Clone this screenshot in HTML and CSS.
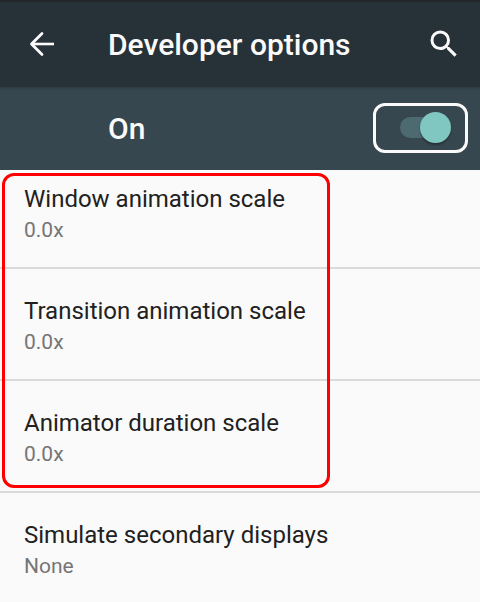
FILE: index.html
```html
<!DOCTYPE html>
<html lang="en">
<head>
    <meta charset="UTF-8">
    <meta name="viewport" content="width=device-width, initial-scale=1.0">
    <title>Developer options</title>
    <link rel="stylesheet" href="styles.css">
</head>
<body>
    <header class="app-bar">
        <button class="icon-btn" type="button" aria-label="Back">
            <svg viewBox="0 0 36 36" fill="none" stroke="currentColor" stroke-width="3">
                <path d="M30 18H8" stroke-width="2.6"/>
                <path d="M18 7.5L7.5 18 18 28.500" stroke-linecap="round" stroke-linejoin="round" stroke-width="2.800"/>
            </svg>
        </button>
        <h1 class="title">Developer options</h1>
        <button class="icon-btn" type="button" aria-label="Search">
            <svg viewBox="0 0 24 24" fill="currentColor">
                <path d="M15.5 14h-.79l-.28-.27A6.471 6.471 0 0 0 16 9.5 6.5 6.5 0 1 0 9.5 16c1.61 0 3.09-.59 4.23-1.57l.27.28v.79l5 4.99L20.49 19l-4.99-5zm-6 0C7.01 14 5 11.99 5 9.5S7.01 5 9.5 5 14 7.01 14 9.5 11.99 14 9.5 14z"/>
            </svg>
        </button>
    </header>

    <div class="switch-bar">
        <label class="switch-label" for="dev-switch">On</label>
        <div class="switch-frame">
            <input class="switch" type="checkbox" role="switch" id="dev-switch" checked>
        </div>
    </div>

    <main class="settings">
        <div class="highlighted">
            <div class="setting">
                <h2 class="name">Window animation scale</h2>
                <p class="value">0.0x</p>
            </div>
            <div class="setting">
                <h2 class="name">Transition animation scale</h2>
                <p class="value">0.0x</p>
            </div>
            <div class="setting">
                <h2 class="name">Animator duration scale</h2>
                <p class="value">0.0x</p>
            </div>
            <div class="outline"></div>
        </div>
        <div class="setting">
            <h2 class="name">Simulate secondary displays</h2>
            <p class="value">None</p>
        </div>
    </main>
</body>
</html>
```

FILE: styles.css
```css
* {
    box-sizing: border-box;
}

body {
    margin: 0;
    background: #fafafa;
    font-family: Roboto, "Liberation Sans", sans-serif;
    color: #212121;
}

.app-bar {
    display: flex;
    align-items: center;
    padding: 23px 18px 24px 24px;
    border-top: 2px solid #21272b;
    background: #273238;
    color: #fafafa;
}

.icon-btn {
    width: 36px;
    height: 36px;
    padding: 0;
    border: none;
    background: none;
    color: inherit;
    cursor: pointer;
}

.icon-btn svg {
    display: block;
    width: 100%;
    height: 100%;
}

.title,
.switch-label {
    padding-top: 2px;
    font-size: 30px;
    line-height: 36px;
    font-weight: 500;
}

.title {
    flex: 1;
    margin: 0 0 0 48px;
}

.switch-bar {
    display: flex;
    align-items: center;
    justify-content: space-between;
    padding: 16px 12px 17px 108px;
    background: linear-gradient(#2e3b42, #37474f 3px);
    color: #fafafa;
}

.switch-frame {
    display: flex;
    padding: 6px 14px 7px 24px;
    border: 3px solid #fafafa;
    border-radius: 12px;
}

/* Track and thumb are both drawn on the checkbox itself */
.switch {
    appearance: none;
    display: grid;
    align-items: center;
    width: 51px;
    height: 31px;
    margin: 0;
    cursor: pointer;
}

.switch::before,
.switch::after {
    content: "";
    grid-area: 1 / 1;
}

.switch::before {
    width: 42px;
    height: 21px;
    border-radius: 11px;
    background: #4c6a70;
}

.switch::after {
    justify-self: start;
    width: 31px;
    height: 31px;
    border-radius: 50%;
    background: #80cbc4;
    box-shadow: 0 2px 2px rgba(0, 0, 0, 0.3);
}

.switch:checked::after {
    justify-self: end;
    background: #7fc7c0;
}

.highlighted {
    position: relative;
}

.outline {
    position: absolute;
    top: 3px;
    bottom: 5px;
    left: 2px;
    width: 328px;
    border: 3px solid #ff0000;
    border-radius: 12px;
    pointer-events: none;
}

.setting {
    padding: 26px 24px 20px;
}

.setting:first-child {
    padding-top: 13px;
}

.highlighted .setting {
    padding-bottom: 22px;
    border-bottom: 2px solid #dadada;
}

.name {
    margin: 0;
    font-size: 24px;
    line-height: 32px;
    font-weight: 400;
}

.value {
    margin: 0;
    font-size: 21px;
    line-height: 30px;
    color: #757575;
}
```
